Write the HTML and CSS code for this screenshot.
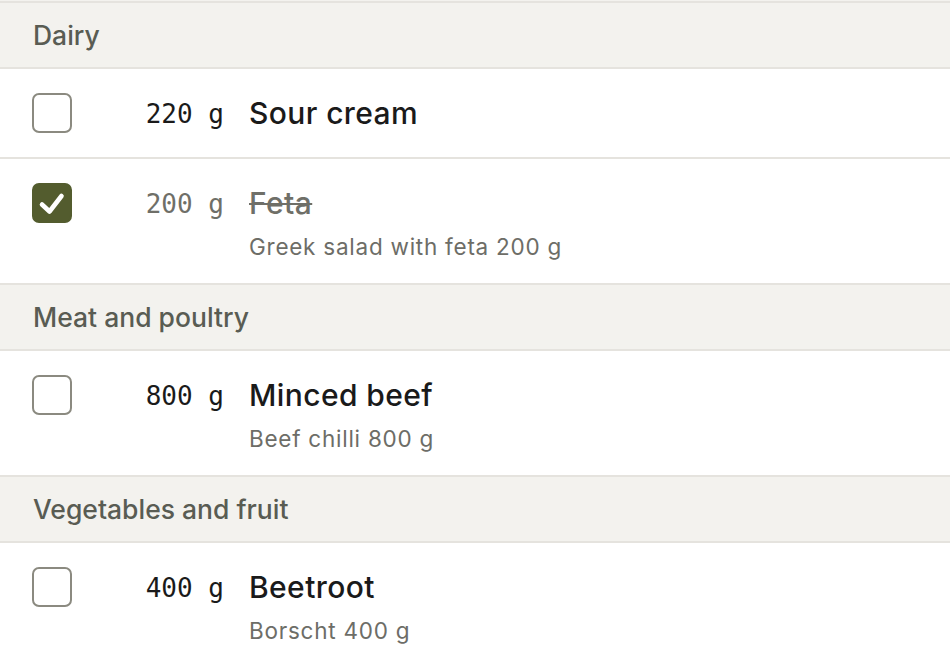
FILE: index.html
```html
<!DOCTYPE html>
<html lang="en">
<head>
<meta charset="utf-8">
<title>Shopping list</title>
<link rel="stylesheet" href="styles.css">
</head>
<body>
<main class="list">
  <section class="group">
    <h2 class="group-title">Dairy</h2>
    <div class="item">
      <span class="box"></span>
      <span class="qty">220 g</span>
      <div class="info"><div class="name">Sour cream</div></div>
    </div>
    <div class="item done">
      <span class="box checked"><svg viewBox="0 0 40 40" width="40" height="40"><polyline points="10,21.5 17.5,28.5 29.5,13" fill="none" stroke="#fff" stroke-width="4.6" stroke-linecap="round" stroke-linejoin="round"/></svg></span>
      <span class="qty">200 g</span>
      <div class="info"><div class="name">Feta</div><div class="sub">Greek salad with feta 200 g</div></div>
    </div>
  </section>
  <section class="group">
    <h2 class="group-title">Meat and poultry</h2>
    <div class="item">
      <span class="box"></span>
      <span class="qty">800 g</span>
      <div class="info"><div class="name">Minced beef</div><div class="sub">Beef chilli 800 g</div></div>
    </div>
  </section>
  <section class="group">
    <h2 class="group-title">Vegetables and fruit</h2>
    <div class="item">
      <span class="box"></span>
      <span class="qty">400 g</span>
      <div class="info"><div class="name">Beetroot</div><div class="sub">Borscht 400 g</div></div>
    </div>
  </section>
</main>
</body>
</html>
```
FILE: styles.css
```css
html, body {
  margin: 0;
  padding: 0;
  background: #ffffff;
  overflow: hidden;
}
body {
  padding-top: 1px;
  background: #f3f2ee;
  font-family: Inter, "Liberation Sans", sans-serif;
}
.list {
  border-top: 2px solid #e5e3de;
  background: #ffffff;
}
.group-title {
  margin: 0;
  height: 64px;
  display: flex;
  align-items: center;
  padding-left: 33px;
  background: #f3f2ee;
  border-bottom: 2px solid #e5e3de;
  font-size: 26.5px;
  font-weight: 500;
  color: #595c53;
  letter-spacing: 0;
}
.item {
  display: grid;
  grid-template-columns: 40px 127px 1fr;
  column-gap: 25px;
  align-items: start;
  padding: 24px 0 24px 32px;
  border-bottom: 2px solid #e5e3de;
  background: #ffffff;
}
.box {
  width: 40px;
  height: 40px;
  box-sizing: border-box;
  border: 2px solid #8b8a80;
  border-radius: 7px;
  display: block;
}
.box.checked {
  background: #535c2e;
  border-color: #535c2e;
  position: relative;
}
.box.checked svg {
  position: absolute;
  left: -2px;
  top: -2px;
}
.qty {
  font-family: "DejaVu Sans Mono", "Liberation Mono", monospace;
  font-size: 26px;
  height: 40px;
  line-height: 42px;
  text-align: right;
  color: #1a1a1a;
  white-space: pre;
  overflow: visible;
}
.name {
  font-size: 30px;
  line-height: 40px;
  font-weight: 500;
  color: #1a1a1a;
  letter-spacing: 0.4px;
}
.sub {
  margin-top: 12px;
  font-size: 22.5px;
  line-height: 24px;
  color: #6d6d67;
  letter-spacing: 0.75px;
}
.done .qty,
.done .name {
  color: #6f6f68;
}
.done .name {
  text-decoration: line-through;
  text-decoration-thickness: 2px;
}
```
